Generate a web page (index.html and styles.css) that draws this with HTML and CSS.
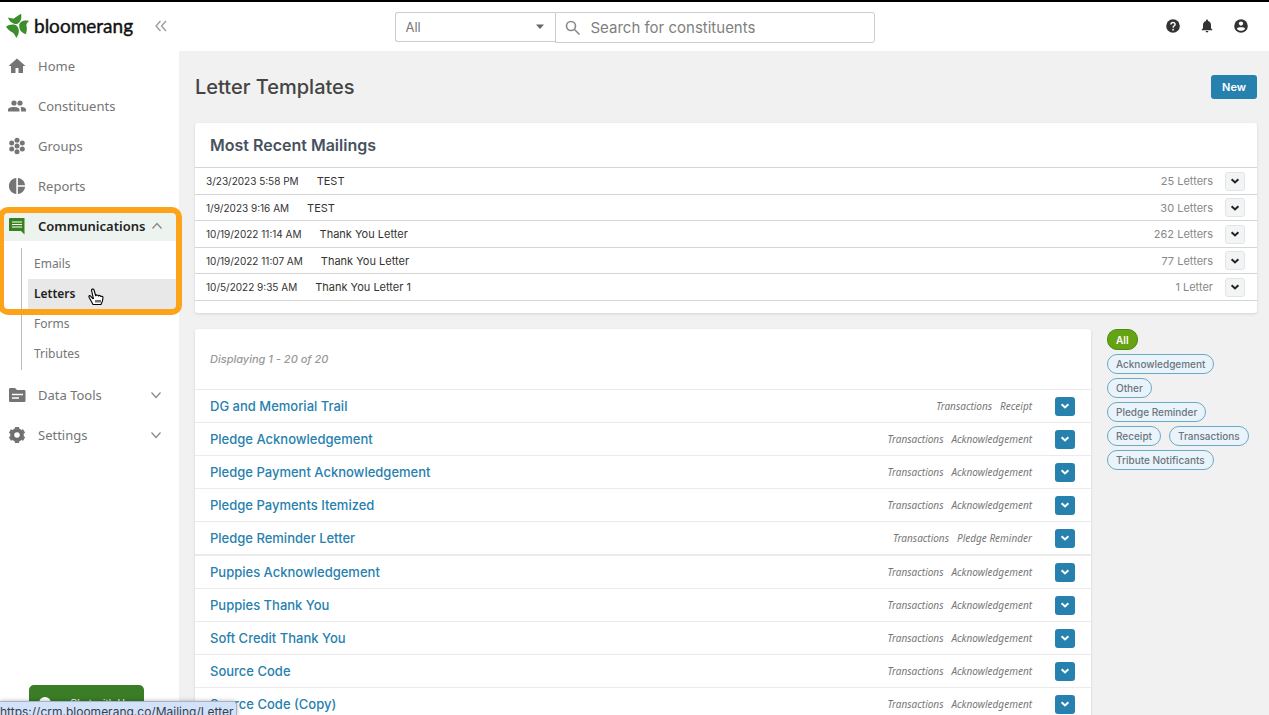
FILE: index.html
```html
<!DOCTYPE html>
<html lang="en">
<head>
  <meta charset="UTF-8" />
  <meta name="viewport" content="width=device-width, initial-scale=1.0" />
  <title>Letter Templates - Bloomerang</title>
  <link rel="stylesheet" href="styles.css">
</head>
<body>
  <svg class="sprite" aria-hidden="true">
    <symbol id="caret" viewBox="0 0 10 10"><path d="M1.600 3.200 5 6.400l3.400-3.200" fill="none" stroke="currentColor" stroke-width="2"/></symbol>
    <symbol id="down" viewBox="0 0 12 12"><path d="m1.500 3.500 4.500 5 4.500-5" fill="none" stroke="currentColor" stroke-width="1.300"/></symbol>
    <symbol id="up" viewBox="0 0 12 12"><path d="m1.500 8.500 4.500-5 4.500 5" fill="none" stroke="currentColor" stroke-width="1.300"/></symbol>
  </svg>

  <header class="topbar">
    <div class="brand">
      <a href="#" class="logo">
        <svg width="24" height="26" viewBox="0 0 24 26" fill="#3c8d2b">
          <path d="M11.500 10.800C8.500 11.800 3.500 9.500 2 4.500c2.500 1 4 .8 6 1C10 4 12 2.500 15 .8c1 4 0 8-3.500 10z"/>
          <path d="M13.200 13c0-3.500 3.300-6.500 9.800-5-2 1.500-2.500 3-2.700 4.500.7 2 1 4-.3 8.500-4-.5-6.800-4-6.800-8z"/>
          <path d="M11 13c2.800 3 2.300 8.500-.8 12-.9-2.500-2-4-3.200-5.300C4.500 18.500 2 17 0 13.800c3-2.300 8-3.300 11-.8z"/>
        </svg>
        <span>bloomerang</span>
      </a>
      <button class="icon-btn collapse" aria-label="Collapse menu">
        <svg width="14" height="12" viewBox="0 0 14 12" fill="none" stroke="#999" stroke-width="1.300"><path d="M6.500 1 2 6l4.500 5M12 1 7.500 6l4.500 5"/></svg>
      </button>
    </div>
    <form class="search">
      <div class="scope">
        <select aria-label="Search scope"><option>All</option></select>
        <svg width="10" height="6" viewBox="0 0 10 6" fill="#666"><path d="M1 .5h8L5 5z"/></svg>
      </div>
      <label class="search-box">
        <svg width="16" height="16" viewBox="0 0 16 16" fill="none" stroke="#888" stroke-width="1.600"><circle cx="6" cy="6" r="4.500"/><path d="m9.500 9.500 5 5"/></svg>
        <input type="text" placeholder="Search for constituents" aria-label="Search for constituents" />
      </label>
    </form>
    <div class="tools">
      <button class="icon-btn" aria-label="Help">
        <svg width="14" height="14" viewBox="0 0 14 14"><circle cx="7" cy="7" r="6.800" fill="#333"/><path d="M4.900 5.600C5 2.700 9.300 2.900 9.100 5.500 9 6.800 7.100 7 7.100 8.700" fill="none" stroke="#fff" stroke-width="1.400"/><circle cx="7.100" cy="10.700" r=".9" fill="#fff"/></svg>
      </button>
      <button class="icon-btn" aria-label="Notifications">
        <svg width="14" height="14" viewBox="0 0 14 14" fill="#333"><path d="M7 .5a1 1 0 0 1 1 1v.4c2 .5 3 2.100 3 4.100v3.200l1.300 1.300v.7H1.700v-.7L3 9.200V6c0-2 1-3.600 3-4.100v-.4a1 1 0 0 1 1-1zM5.600 12h2.800a1.400 1.400 0 0 1-2.800 0z"/></svg>
      </button>
      <button class="icon-btn" aria-label="Account">
        <svg width="14" height="14" viewBox="0 0 14 14"><circle cx="7" cy="7" r="6.800" fill="#333"/><circle cx="7" cy="4.600" r="2.100" fill="#fff"/><path d="M2.900 9.700C3.500 7.800 10.500 7.800 11.100 9.700 9.200 12.400 4.800 12.400 2.900 9.700z" fill="#fff"/></svg>
      </button>
    </div>
  </header>

  <div class="layout">
    <nav class="sidebar">
      <a href="#" class="nav-item">
        <svg viewBox="0 0 18 18"><path d="M7.500 16v-5h3v5H15V9h2.500L9 1.500.5 9H3v7z"/></svg>
        <span>Home</span>
      </a>
      <a href="#" class="nav-item">
        <svg viewBox="0 0 18 18"><circle cx="6" cy="6" r="2.600"/><circle cx="12" cy="6" r="2.600"/><path d="M0 14.500v-2c0-3.500 11.500-3.500 11.500 0v2zM13 14.500h5v-2c0-2-3-2.700-5.500-2.600.5.700.6 1.600.5 2.600z"/></svg>
        <span>Constituents</span>
      </a>
      <a href="#" class="nav-item">
        <svg viewBox="0 0 18 18"><circle cx="9" cy="3.200" r="2.500"/><circle cx="9" cy="9" r="2.500"/><circle cx="9" cy="14.800" r="2.500"/><circle cx="3.700" cy="6" r="2.500"/><circle cx="14.300" cy="6" r="2.500"/><circle cx="3.700" cy="12" r="2.500"/><circle cx="14.300" cy="12" r="2.500"/></svg>
        <span>Groups</span>
      </a>
      <a href="#" class="nav-item">
        <svg viewBox="0 0 18 18"><path d="M8.300 1v16C-1.500 16.200-1.500 1.800 8.300 1zM9.900 1c4 .5 6.900 3.300 7.100 7.200H9.900zM9.900 9.800H17c-.2 3.900-3.100 6.700-7.100 7.200z"/></svg>
        <span>Reports</span>
      </a>
      <div class="spotlight">
        <a href="#" class="nav-item active">
          <svg viewBox="0 0 18 18"><path d="M2 1h14.500v16.500L13 14H1V2a1 1 0 0 1 1-1z" fill="#388020"/><path d="M4 5h10M4 7.500h10M4 10h10" stroke="#fff" stroke-width="1.200"/></svg>
          <span>Communications</span>
          <svg class="chev"><use href="#up"/></svg>
        </a>
        <ul class="subnav">
          <li><a href="#">Emails</a></li>
          <li><a href="#" class="current">Letters</a></li>
          <li><a href="#">Forms</a></li>
          <li><a href="#">Tributes</a></li>
        </ul>
        <div class="highlight"></div>
        <svg class="pointer" width="16" height="18" viewBox="0 0 16 18"><path d="M5 11 2.500 8C1 7 .5 8.500 1.200 9.500L5 16.500h8c1-2 2-4 2-7 0-1.600-2-1.600-2.200-.5.200-2-2.200-2-2.400-.5.100-2-2.400-2-2.600-.5L6 2c-.5-1.600-2.800-1-2.400.7L5.500 11M8 12v2.500M10 12v2.500M12 12v2.500" fill="#fff" stroke="#000" stroke-width="1.100"/></svg>
      </div>
      <a href="#" class="nav-item">
        <svg viewBox="0 0 18 18"><path d="M1 3.500C1 2.500 1.500 2 2.500 2H7l2 2h7c1 0 1.500.5 1.500 1.500v9c0 1-.5 1.500-1.500 1.500H2.500C1.500 16 1 15.500 1 14.500z"/><path d="M4 8.500h11M4 12h7" stroke="#fff" stroke-width="1.500"/></svg>
        <span>Data Tools</span>
        <svg class="chev"><use href="#down"/></svg>
      </a>
      <a href="#" class="nav-item">
        <svg viewBox="0 0 18 18"><circle cx="9" cy="9" r="4.800" fill="none" stroke="#6b706c" stroke-width="4"/><path d="M7 1h4l.5 3h-5zM7 17h4l.5-3h-5zM.9 6.700l2-3.400 2.900 1.100-2.500 4.300zM17.100 6.700l-2-3.400-2.900 1.100 2.500 4.300zM.9 11.300l2 3.400 2.900-1.100-2.500-4.300zM17.100 11.300l-2 3.400-2.900-1.100 2.500-4.300z"/></svg>
        <span>Settings</span>
        <svg class="chev"><use href="#down"/></svg>
      </a>
    </nav>

    <main class="content">
      <div class="page-head">
        <h1>Letter Templates</h1>
        <button class="btn-new">New</button>
      </div>

      <section class="panel recent">
        <h2>Most Recent Mailings</h2>
        <ul>
          <li><time>3/23/2023 5:58 PM</time><span>TEST</span><span class="count">25 Letters</span><button class="drop light" aria-label="Options"><svg><use href="#caret"/></svg></button></li>
          <li><time>1/9/2023 9:16 AM</time><span>TEST</span><span class="count">30 Letters</span><button class="drop light" aria-label="Options"><svg><use href="#caret"/></svg></button></li>
          <li><time>10/19/2022 11:14 AM</time><span>Thank You Letter</span><span class="count">262 Letters</span><button class="drop light" aria-label="Options"><svg><use href="#caret"/></svg></button></li>
          <li><time>10/19/2022 11:07 AM</time><span>Thank You Letter</span><span class="count">77 Letters</span><button class="drop light" aria-label="Options"><svg><use href="#caret"/></svg></button></li>
          <li><time>10/5/2022 9:35 AM</time><span>Thank You Letter 1</span><span class="count">1 Letter</span><button class="drop light" aria-label="Options"><svg><use href="#caret"/></svg></button></li>
        </ul>
      </section>

      <div class="columns">
        <section class="panel templates">
          <p class="displaying">Displaying 1 - 20 of 20</p>
          <ul>
            <li><a href="#">DG and Memorial Trail</a><em>Transactions</em><em>Receipt</em><button class="drop" aria-label="Options"><svg><use href="#caret"/></svg></button></li>
            <li><a href="#">Pledge Acknowledgement</a><em>Transactions</em><em>Acknowledgement</em><button class="drop" aria-label="Options"><svg><use href="#caret"/></svg></button></li>
            <li><a href="#">Pledge Payment Acknowledgement</a><em>Transactions</em><em>Acknowledgement</em><button class="drop" aria-label="Options"><svg><use href="#caret"/></svg></button></li>
            <li><a href="#">Pledge Payments Itemized</a><em>Transactions</em><em>Acknowledgement</em><button class="drop" aria-label="Options"><svg><use href="#caret"/></svg></button></li>
            <li class="group-end"><a href="#">Pledge Reminder Letter</a><em>Transactions</em><em>Pledge Reminder</em><button class="drop" aria-label="Options"><svg><use href="#caret"/></svg></button></li>
            <li><a href="#">Puppies Acknowledgement</a><em>Transactions</em><em>Acknowledgement</em><button class="drop" aria-label="Options"><svg><use href="#caret"/></svg></button></li>
            <li><a href="#">Puppies Thank You</a><em>Transactions</em><em>Acknowledgement</em><button class="drop" aria-label="Options"><svg><use href="#caret"/></svg></button></li>
            <li><a href="#">Soft Credit Thank You</a><em>Transactions</em><em>Acknowledgement</em><button class="drop" aria-label="Options"><svg><use href="#caret"/></svg></button></li>
            <li><a href="#">Source Code</a><em>Transactions</em><em>Acknowledgement</em><button class="drop" aria-label="Options"><svg><use href="#caret"/></svg></button></li>
            <li><a href="#">Source Code (Copy)</a><em>Transactions</em><em>Acknowledgement</em><button class="drop" aria-label="Options"><svg><use href="#caret"/></svg></button></li>
          </ul>
        </section>
        <aside class="filters">
          <button class="tag selected">All</button>
          <button class="tag">Acknowledgement</button>
          <button class="tag">Other</button>
          <button class="tag">Pledge Reminder</button>
          <button class="tag">Receipt</button>
          <button class="tag">Transactions</button>
          <button class="tag">Tribute Notificants</button>
        </aside>
      </div>
    </main>
  </div>

  <button class="chat"><i></i>Chat with Us</button>
  <div class="status">https://crm.bloomerang.co/Mailing/Letter</div>
</body>
</html>
```
FILE: styles.css
```css
* {
  box-sizing: border-box;
}
body {
  margin: 0;
  height: 100vh;
  overflow: hidden;
  display: flex;
  flex-direction: column;
  font-family: Inter, "Noto Sans", sans-serif;
  font-size: 13px;
  color: #333;
  background: #f1f1f1;
}
button, input, select {
  font-family: inherit;
}
button {
  cursor: pointer;
}
a {
  text-decoration: none;
}
ul {
  list-style: none;
  margin: 0;
  padding: 0;
}
.sprite {
  display: none;
}

/* top bar */
.topbar {
  display: grid;
  grid-template-columns: 1fr 480px 1fr;
  height: 51px;
  flex-shrink: 0;
  background: #fff;
  border-top: 2px solid #000;
}
.brand {
  display: flex;
  align-items: center;
  justify-content: space-between;
  width: 168px;
  padding: 0 0 2px 6px;
}
.logo {
  display: flex;
  align-items: center;
  gap: 4px;
  color: #111;
  font-family: Lato, sans-serif;
  font-size: 19px;
  font-weight: 400;
  -webkit-text-stroke: 0.4px #111;
}
.icon-btn {
  display: flex;
  padding: 0;
  border: 0;
  background: none;
}
.search {
  display: flex;
  align-items: flex-start;
  padding-top: 10px;
}
.scope {
  position: relative;
  width: 160px;
}
.scope select {
  display: block;
  width: 100%;
  height: 30px;
  padding: 0 10px;
  appearance: none;
  border: 1px solid #ccc;
  border-right: 0;
  border-radius: 3px 0 0 3px;
  background: #fff;
  color: #777;
  font-size: 13px;
}
.scope svg {
  position: absolute;
  right: 10px;
  top: 12px;
  pointer-events: none;
}
.search-box {
  flex: 1;
  display: flex;
  align-items: center;
  gap: 10px;
  height: 31px;
  padding: 0 9px;
  border: 1px solid #ccc;
  border-radius: 0 3px 3px 0;
}
.search-box input {
  flex: 1;
  min-width: 0;
  padding: 0;
  border: 0;
  outline: none;
  font-size: 15px;
}
.search-box input::placeholder {
  color: #808080;
}
.tools {
  display: flex;
  align-items: center;
  justify-content: flex-end;
  gap: 20px;
  padding: 0 21px 2px 0;
}

/* sidebar */
.layout {
  flex: 1;
  min-height: 0;
  display: flex;
}
.sidebar {
  width: 179px;
  flex-shrink: 0;
  background: #fff;
  font-family: "Noto Sans", sans-serif;
}
.nav-item {
  display: flex;
  align-items: center;
  gap: 12px;
  height: 30px;
  margin-bottom: 10px;
  padding: 0 17px 0 8px;
  color: #757575;
  font-size: 13px;
}
.nav-item svg {
  width: 18px;
  height: 18px;
  flex-shrink: 0;
  fill: #757575;
}
.nav-item .chev {
  width: 12px;
  height: 12px;
  margin-left: auto;
  color: #8a8a8a;
}
.nav-item.active {
  margin-bottom: 7px;
  background: #edf3ee;
  color: #222;
  font-weight: 600;
}
.nav-item.active span {
  margin-right: -6px;
}
.spotlight {
  position: relative;
  padding-bottom: 10px;
}
.highlight {
  position: absolute;
  left: -2px;
  top: -4px;
  width: 184px;
  height: 108px;
  border: 6px solid #fca31a;
  border-radius: 10px;
  pointer-events: none;
}
.pointer {
  position: absolute;
  left: 88px;
  top: 77px;
}
.subnav {
  margin-left: 21px;
  padding: 1px 0 1px 6px;
  border-left: 1px solid #bbb;
}
.subnav a {
  display: block;
  padding-left: 6px;
  line-height: 30px;
  font-size: 12px;
  color: #757575;
}
.subnav .current {
  background: #e8e8e8;
  color: #222;
  font-weight: 600;
}

/* main column */
.content {
  flex: 1;
  min-width: 0;
  padding: 0 12px 0 16px;
}
.page-head {
  display: flex;
  align-items: center;
  justify-content: space-between;
  height: 72px;
}
h1 {
  margin: 0;
  font-size: 20px;
  font-weight: 500;
  line-height: 26px;
  color: #444;
}
.btn-new {
  width: 46px;
  height: 24px;
  padding: 0;
  border: 0;
  border-radius: 3px;
  background: #2781ae;
  color: #fff;
  font-size: 11px;
  font-weight: 600;
}
.panel {
  background: #fff;
  border-radius: 3px;
  box-shadow: 0 1px 3px rgba(0,0,0,0.12);
}
.recent {
  padding-bottom: 12px;
  font-size: 11px;
}
.recent h2 {
  margin: 0;
  padding: 0 15px;
  line-height: 44px;
  border-bottom: 1px solid #d5d5d5;
  font-size: 16px;
  font-weight: 600;
  color: #46525e;
}
.recent li {
  display: flex;
  align-items: center;
  gap: 18px;
  height: 27px;
  padding: 0 12px 0 11px;
  border-bottom: 1px solid #d5d5d5;
}
.recent li:nth-child(even) {
  height: 26px;
}
.recent time {
  font-size: 10px;
}
.count {
  margin-left: auto;
  color: #888;
}
.drop {
  display: flex;
  align-items: center;
  justify-content: center;
  width: 20px;
  height: 19px;
  padding: 0;
  border: 0;
  border-radius: 3px;
  background: #2781ae;
  color: #fff;
}
.drop svg {
  width: 10px;
  height: 10px;
}
.drop.light {
  margin-left: -6px;
  border: 1px solid #e2e4e6;
  background: #f3f4f6;
  color: #222;
}
.columns {
  display: flex;
  gap: 16px;
  margin-top: 16px;
}
.templates {
  flex: 1;
}
.displaying {
  margin: 0;
  padding: 0 15px;
  line-height: 60px;
  border-bottom: 1px solid #ebebeb;
  font-size: 11px;
  font-style: italic;
  font-weight: 500;
  color: #999;
}
.templates li {
  display: flex;
  align-items: center;
  gap: 8px;
  height: 33px;
  padding: 0 16px 0 15px;
  border-bottom: 1px solid #ebebeb;
}
.templates .group-end {
  height: 34px;
  border-bottom-width: 2px;
}
.templates a {
  margin-right: auto;
  color: #2781ae;
  font-size: 13px;
  font-weight: 500;
}
.templates em {
  font-family: "Noto Sans", sans-serif;
  font-size: 10px;
  color: #777;
}
.templates .drop {
  margin-left: 15px;
}
.filters {
  width: 150px;
  display: flex;
  flex-wrap: wrap;
  align-content: flex-start;
  gap: 4px 8px;
}
.tag {
  height: 20px;
  padding: 0 8px;
  border: 1px solid #69a9c8;
  border-radius: 10px;
  background: #eaf3fa;
  color: #6b7680;
  font-size: 10px;
  font-weight: 500;
}
.tag.selected {
  height: 21px;
  margin-right: 100px;
  border-color: #4d8a12;
  background: #66a312;
  color: #fff;
  font-weight: 600;
}

/* bottom overlays */
.chat {
  position: absolute;
  left: 29px;
  bottom: -6px;
  width: 115px;
  height: 36px;
  display: flex;
  align-items: center;
  gap: 19px;
  padding: 0 10px;
  border: 0;
  border-radius: 5px;
  background: #3b7d27;
  color: #fff;
  font-size: 10px;
  white-space: nowrap;
}
.chat i {
  width: 12px;
  height: 12px;
  border-radius: 50%;
  background: #fff;
}
.status {
  position: absolute;
  left: 0;
  bottom: 0;
  height: 14px;
  padding-right: 3px;
  overflow: hidden;
  border: 1px solid #a9b3c6;
  border-width: 1px 1px 0 0;
  border-radius: 0 4px 0 0;
  background: #d3e2fb;
  color: #3a4048;
  font-size: 12px;
  line-height: 20px;
  box-shadow: 0 0 4px rgba(0,0,0,0.3);
}
```
